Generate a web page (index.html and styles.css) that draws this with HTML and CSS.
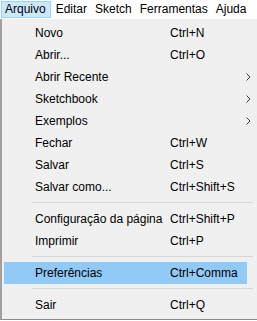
FILE: index.html
```html
<!DOCTYPE html>
<html lang="pt-BR">
<head>
    <meta charset="UTF-8">
    <meta name="viewport" content="width=device-width, initial-scale=1.0">
    <title>Arquivo</title>
    <link rel="stylesheet" href="styles.css">
</head>
<body>
    <div class="menubar">
        <span class="menubar-item active">Arquivo</span>
        <span class="menubar-item">Editar</span>
        <span class="menubar-item">Sketch</span>
        <span class="menubar-item">Ferramentas</span>
        <span class="menubar-item">Ajuda</span>
    </div>

    <div class="menu">
        <div class="item"><span class="label">Novo</span><span class="shortcut">Ctrl+N</span></div>
        <div class="item"><span class="label">Abrir...</span><span class="shortcut">Ctrl+O</span></div>
        <div class="item"><span class="label">Abrir Recente</span><span class="shortcut"></span>
            <svg class="arrow" width="5" height="8" viewBox="0 0 5 8"><path d="M0.5 0.5 L4 4 L0.5 7.5" fill="none" stroke="#3c3c3c" stroke-width="1"/></svg>
        </div>
        <div class="item"><span class="label">Sketchbook</span><span class="shortcut"></span>
            <svg class="arrow" width="5" height="8" viewBox="0 0 5 8"><path d="M0.5 0.5 L4 4 L0.5 7.5" fill="none" stroke="#3c3c3c" stroke-width="1"/></svg>
        </div>
        <div class="item"><span class="label">Exemplos</span><span class="shortcut"></span>
            <svg class="arrow" width="5" height="8" viewBox="0 0 5 8"><path d="M0.5 0.5 L4 4 L0.5 7.5" fill="none" stroke="#3c3c3c" stroke-width="1"/></svg>
        </div>
        <div class="item"><span class="label">Fechar</span><span class="shortcut">Ctrl+W</span></div>
        <div class="item"><span class="label">Salvar</span><span class="shortcut">Ctrl+S</span></div>
        <div class="item"><span class="label">Salvar como...</span><span class="shortcut">Ctrl+Shift+S</span></div>
        <div class="sep"></div>
        <div class="item"><span class="label">Configuração da página</span><span class="shortcut">Ctrl+Shift+P</span></div>
        <div class="item"><span class="label">Imprimir</span><span class="shortcut">Ctrl+P</span></div>
        <div class="sep"></div>
        <div class="item selected"><span class="label">Preferências</span><span class="shortcut">Ctrl+Comma</span></div>
        <div class="sep"></div>
        <div class="item"><span class="label">Sair</span><span class="shortcut">Ctrl+Q</span></div>
    </div>
</body>
</html>
```

FILE: styles.css
```css
body {
    font-family: "Liberation Sans", Arial, sans-serif;
    font-size: 12px;
    color: #000;
    margin: 0;
    padding: 0;
    background-color: #fff;
    width: 257px;
    height: 321px;
    overflow: hidden;
}
.menubar {
    height: 19px;
    display: flex;
    align-items: center;
    padding-left: 1px;
    background-color: #fff;
}
.menubar-item {
    height: 17px;
    line-height: 15px;
    padding: 0 3px;
    border: 1px solid transparent;
    box-sizing: border-box;
    white-space: nowrap;
}
.menubar-item.active {
    padding: 0 4px 0 3px;
    margin-right: 1px;
    background-color: #cce8ff;
    border-color: #99d1ff;
}
.menu {
    background-color: #f0f0f0;
    border-left: 2px solid #a0a0a0;
    border-bottom: 1px solid #8c8c8c;
    padding: 3px 0;
    width: 257px;
    box-sizing: border-box;
}
.item {
    height: 22px;
    display: flex;
    align-items: center;
    margin: 0 10px 0 2px;
    padding-left: 31px;
}
.item.selected {
    background-color: #91c9f7;
}
.label {
    width: 135px;
    white-space: nowrap;
}
.shortcut {
    flex: 1;
    white-space: nowrap;
}
.arrow {
    margin-right: -4px;
}
.sep {
    height: 10px;
    padding-top: 4px;
    box-sizing: border-box;
}
.sep::after {
    content: "";
    display: block;
    height: 1px;
    background-color: #d7d7d7;
    margin: 0 4px 0 30px;
}
```
